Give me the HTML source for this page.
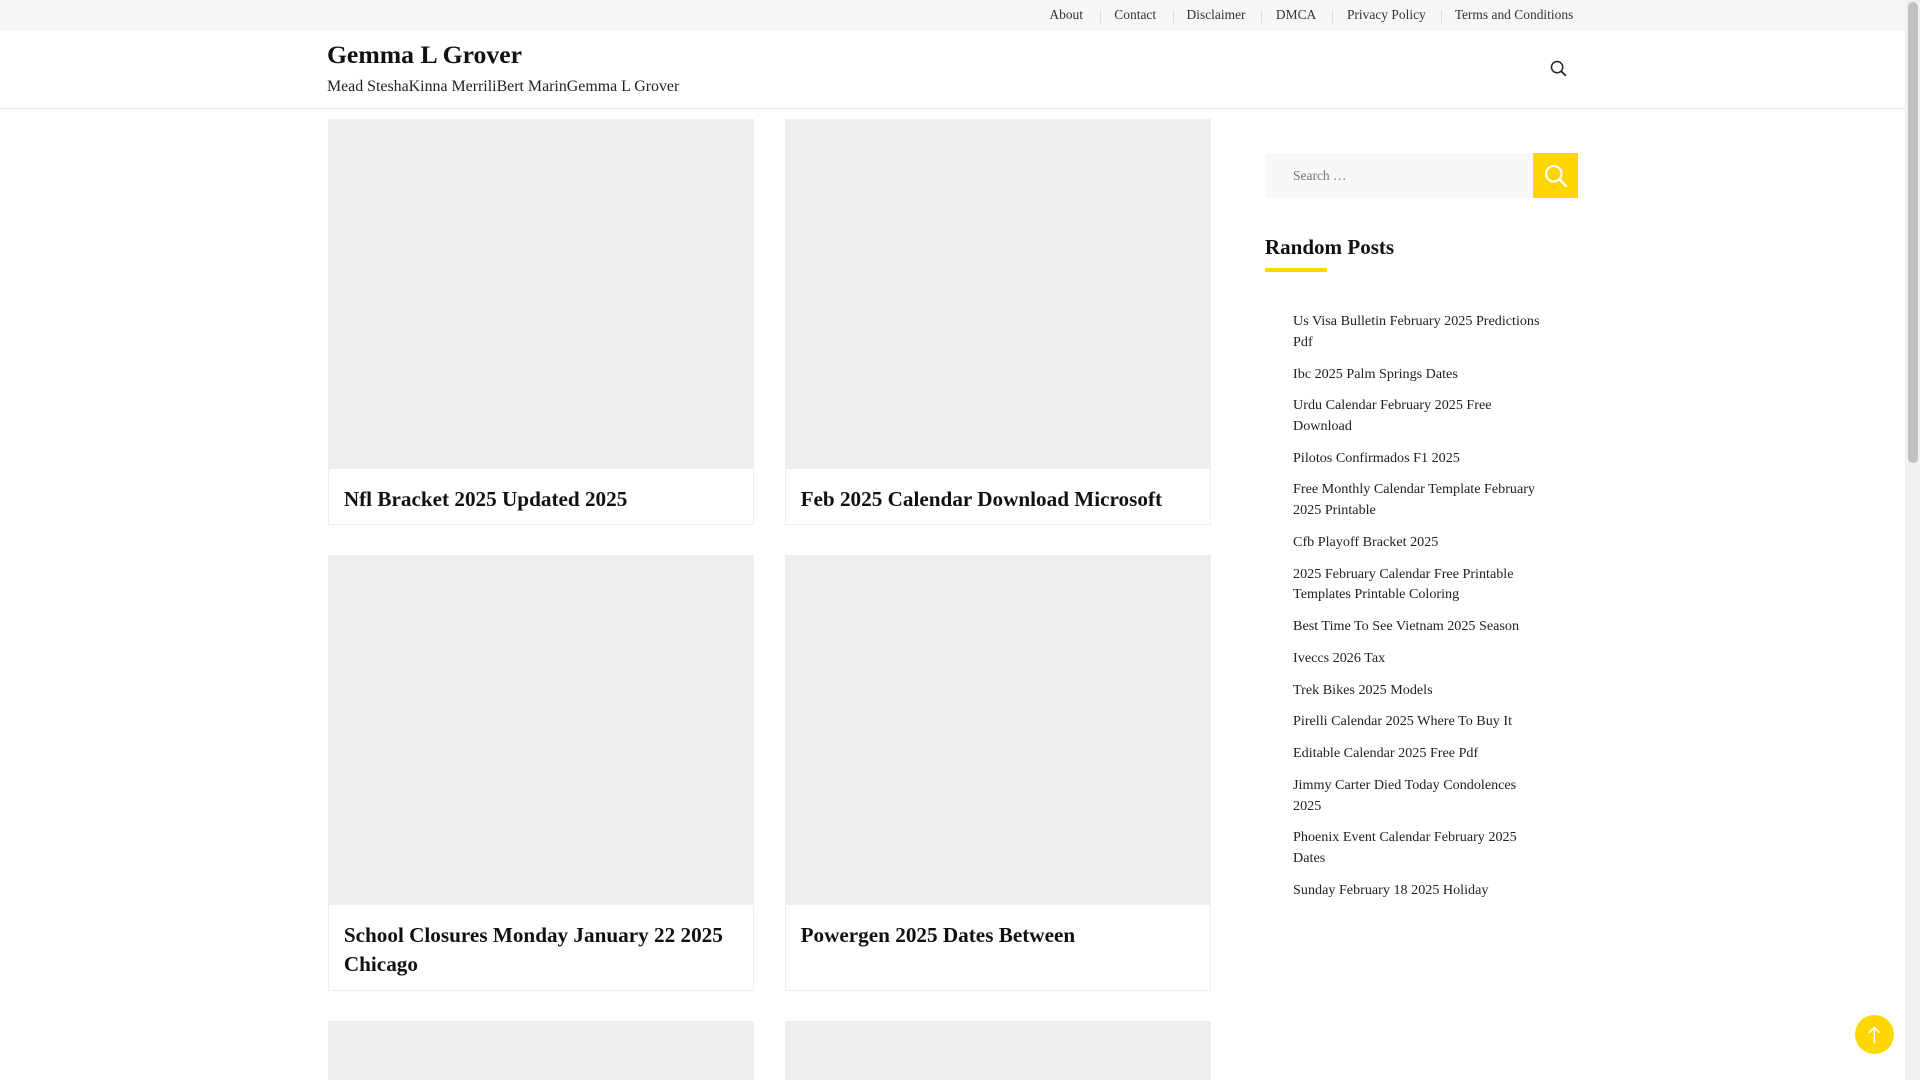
<!DOCTYPE html>
<html><head><meta charset="utf-8"><style>
html,body{margin:0;padding:0;overflow:hidden;width:1920px;height:1080px;background:#fff}
#w{zoom:1.22449;position:relative;width:1568px;height:882px;overflow:hidden;font-family:"Liberation Serif",serif;color:#222}
.top{position:absolute;left:0;top:0;width:1556px;height:25px;background:#f6f7f9}
.top a{position:absolute;top:6px;font-size:11px;color:#333;text-decoration:none}
.sep{position:absolute;top:8px;width:1px;height:11px;background:#ddd}
.hdr{position:absolute;left:0;top:25px;width:1556px;height:63px;border-bottom:1px solid #e6e6e6}
.title{position:absolute;left:267px;top:33px;font-size:21px;font-weight:bold;color:#111}
.desc{position:absolute;left:267px;top:64px;font-size:13px;color:#222}
.card{position:absolute;width:346px;border:1px solid #eee;background:#fff}
.card .img{height:285px;background:#eee}
.card h2{margin:0;padding:13px 12px 0;font-size:17.3px;line-height:24px;font-weight:bold;color:#111}
.srch{position:absolute;left:1033px;top:125px;width:219px;height:37px;background:#f8f8f8}
.srch span{position:absolute;left:23px;top:12px;font-size:11px;color:#777}
.btn{position:absolute;left:1252px;top:125px;width:37px;height:37px;background:#ffd700}
.rp{position:absolute;left:1033px;top:192px;font-size:17.2px;font-weight:bold;color:#111}
.ul{position:absolute;left:1033px;top:219px;width:51px;height:3px;background:#ffd700}
.list{position:absolute;left:1056px;top:254px;width:208px;font-size:11.55px;line-height:17px;color:#222}
.list div{margin-bottom:8.9px}
.sb{position:absolute;left:1556px;top:0;width:12px;height:882px;background:#f1f1f1}
.th{position:absolute;left:1558px;top:2px;width:8px;height:376px;background:#c1c1c1;border-radius:4px}
.up{position:absolute;left:1515px;top:829px;width:32px;height:32px;border-radius:50%;background:#ffd700}
</style></head><body><div id="w">
<div class="top">
<a style="left:857px">About</a><div class="sep" style="left:898px"></div>
<a style="left:910px">Contact</a><div class="sep" style="left:958px"></div>
<a style="left:969px">Disclaimer</a><div class="sep" style="left:1030px"></div>
<a style="left:1042px">DMCA</a><div class="sep" style="left:1088px"></div>
<a style="left:1100px">Privacy Policy</a><div class="sep" style="left:1177px"></div>
<a style="left:1188px">Terms and Conditions</a>
</div>
<div class="hdr"></div>
<div class="title">Gemma L Grover</div>
<div class="desc">Mead SteshaKinna MerriliBert MarinGemma L Grover</div>
<svg style="position:absolute;left:1266px;top:49px" width="14" height="14" viewBox="0 0 14 14"><circle cx="5.8" cy="5.8" r="4.6" fill="none" stroke="#222" stroke-width="1.2"/><path d="M9.2 9.2L13 13" stroke="#222" stroke-width="1.4"/></svg>
<div class="card" style="left:268px;top:97px;height:330px"><div class="img"></div><h2>Nfl Bracket 2025 Updated 2025</h2></div>
<div class="card" style="left:641px;top:97px;height:330px"><div class="img"></div><h2>Feb 2025 Calendar Download Microsoft</h2></div>
<div class="card" style="left:268px;top:453px;height:355px"><div class="img"></div><h2>School Closures Monday January 22 2025 Chicago</h2></div>
<div class="card" style="left:641px;top:453px;height:355px"><div class="img"></div><h2>Powergen 2025 Dates Between</h2></div>
<div class="card" style="left:268px;top:834px;height:60px"><div class="img"></div></div>
<div class="card" style="left:641px;top:834px;height:60px"><div class="img"></div></div>
<div class="srch"><span>Search …</span></div>
<div class="btn"><svg style="position:absolute;left:9px;top:9px" width="20" height="20" viewBox="0 0 20 20"><circle cx="8" cy="8" r="6.3" fill="none" stroke="#fff" stroke-width="1.8"/><path d="M12.6 12.6L18.5 18.5" stroke="#fff" stroke-width="2"/></svg></div>
<div class="rp">Random Posts</div><div class="ul"></div>
<div class="list">
<div>Us Visa Bulletin February 2025 Predictions Pdf</div>
<div>Ibc 2025 Palm Springs Dates</div>
<div>Urdu Calendar February 2025 Free Download</div>
<div>Pilotos Confirmados F1 2025</div>
<div>Free Monthly Calendar Template February 2025 Printable</div>
<div>Cfb Playoff Bracket 2025</div>
<div>2025 February Calendar Free Printable Templates Printable Coloring</div>
<div>Best Time To See Vietnam 2025 Season</div>
<div>Iveccs 2026 Tax</div>
<div>Trek Bikes 2025 Models</div>
<div>Pirelli Calendar 2025 Where To Buy It</div>
<div>Editable Calendar 2025 Free Pdf</div>
<div>Jimmy Carter Died Today Condolences 2025</div>
<div>Phoenix Event Calendar February 2025 Dates</div>
<div>Sunday February 18 2025 Holiday</div>
</div>
<div class="up"><svg style="position:absolute;left:10px;top:8px" width="12" height="16" viewBox="0 0 12 16"><path d="M6 15V2M1.5 6.5L6 2l4.5 4.5" fill="none" stroke="#fff" stroke-width="1.3"/></svg></div>
<div class="sb"></div><div class="th"></div>
</div></body></html>
